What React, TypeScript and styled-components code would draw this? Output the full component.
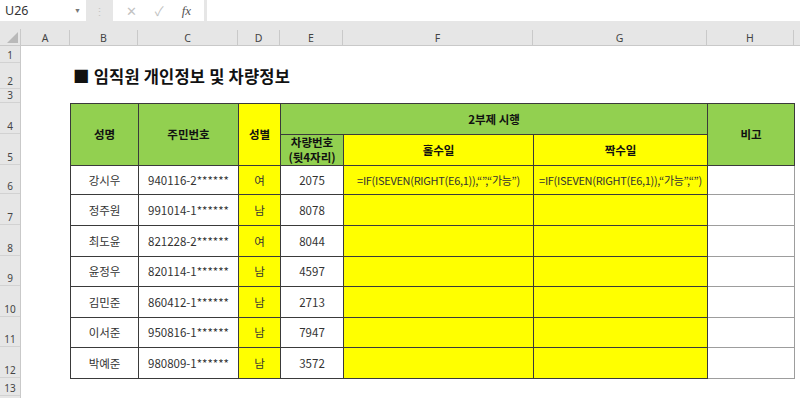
import styled, { createGlobalStyle } from "styled-components";

const GlobalStyle = createGlobalStyle`
  html, body {
    margin: 0;
    padding: 0;
    background: #ffffff;
    overflow: hidden;
  }
  body {
    font-family: "Noto Sans CJK KR", "Noto Sans", sans-serif;
  }
`;

const COLS = [
  { name: "A", width: 49 },
  { name: "B", width: 68 },
  { name: "C", width: 100 },
  { name: "D", width: 42 },
  { name: "E", width: 63 },
  { name: "F", width: 190 },
  { name: "G", width: 174 },
  { name: "H", width: 87 },
  { name: "", width: 60 },
];

const ROW_HEIGHTS = [17, 26, 14, 31, 31, 29, 31, 31, 30, 31, 30, 31, 18, 20];

const people = [
  { name: "강시우", id: "940116-2******", sex: "여", car: "2075" },
  { name: "정주원", id: "991014-1******", sex: "남", car: "8078" },
  { name: "최도윤", id: "821228-2******", sex: "여", car: "8044" },
  { name: "윤정우", id: "820114-1******", sex: "남", car: "4597" },
  { name: "김민준", id: "860412-1******", sex: "남", car: "2713" },
  { name: "이서준", id: "950816-1******", sex: "남", car: "7947" },
  { name: "박예준", id: "980809-1******", sex: "남", car: "3572" },
];

const Page = styled.div`
  width: 800px;
  height: 398px;
  overflow: hidden;
  background: #ffffff;
`;

const TopArea = styled.div`
  background: #e6e6e6;
`;

const FormulaBar = styled.div`
  display: flex;
  align-items: stretch;
  height: 21px;
  padding-bottom: 8px;
`;

const NameBox = styled.div`
  width: 86px;
  background: #ffffff;
  display: flex;
  align-items: center;
  justify-content: space-between;
  padding: 0 5px 0 5px;
  box-sizing: border-box;
  font-family: "Noto Sans", sans-serif;
  font-size: 12.5px;
  color: #333;
`;

const Caret = styled.span`
  font-size: 7px;
  color: #777;
`;

const Grip = styled.div`
  width: 27px;
  display: flex;
  align-items: center;
  justify-content: center;
  color: #c4c4c4;
  font-size: 11px;
`;

const FxBox = styled.div`
  width: 91px;
  background: #ffffff;
  display: flex;
  align-items: center;
  justify-content: space-around;
  padding: 0 4px;
  box-sizing: border-box;
  color: #c2c2c2;
  font-size: 13px;
`;

const FxLabel = styled.span`
  font-family: "Liberation Serif", serif;
  font-style: italic;
  color: #555;
  font-size: 13px;
`;

const FormulaInput = styled.div`
  flex: 1;
  margin-left: 3px;
  background: #ffffff;
`;

const ColumnHeaderRow = styled.div`
  display: flex;
  height: 16px;
  border-bottom: 1px solid #c9c9c9;
`;

const Corner = styled.div`
  width: 20px;
  flex-shrink: 0;
  border-right: 1px solid #c9c9c9;
  position: relative;
`;

const CornerTriangle = styled.div`
  position: absolute;
  right: 2px;
  bottom: 2px;
  width: 0;
  height: 0;
  border-left: 11px solid transparent;
  border-bottom: 11px solid #b9b9b9;
`;

const ColHead = styled.div<{ $w: number }>`
  width: ${(p) => p.$w - 1}px;
  flex-shrink: 0;
  border-right: 1px solid #c9c9c9;
  display: flex;
  align-items: center;
  justify-content: center;
  font-family: "Noto Sans", sans-serif;
  font-size: 10.5px;
  color: #444;
  margin-top: 1px;
`;

const Body = styled.div`
  display: flex;
`;

const RowHeaders = styled.div`
  width: 20px;
  flex-shrink: 0;
  background: #e6e6e6;
  border-right: 1px solid #c9c9c9;
  display: flex;
  flex-direction: column;
`;

const RowNum = styled.div<{ $h: number }>`
  height: ${(p) => p.$h - 1}px;
  border-bottom: 1px solid #d2d2d2;
  display: flex;
  align-items: flex-end;
  justify-content: center;
  font-family: "Noto Sans", sans-serif;
  font-size: 10px;
  line-height: 14px;
  color: #444;
`;

const Canvas = styled.div`
  flex: 1;
  padding-left: 49px;
  padding-top: 17px;
`;

const Title = styled.div`
  height: 26px;
  margin-bottom: 14px;
  display: flex;
  align-items: center;
  padding-left: 3px;
  font-size: 16.5px;
  font-weight: 700;
  color: #111;
  letter-spacing: 0.2px;
`;

const Table = styled.table`
  border-collapse: collapse;
  table-layout: fixed;
  font-size: 11.5px;
`;

const Row = styled.tr<{ $h: number }>`
  height: ${(p) => p.$h}px;
`;

const Cell = styled.td<{ $bg?: string; $head?: boolean; $soft?: boolean }>`
  border: 1px solid ${(p) => (p.$soft ? "#9d9d9d" : "#3a3a3a")};
  background: ${(p) => p.$bg ?? "#ffffff"};
  text-align: center;
  vertical-align: middle;
  padding: 0;
  white-space: nowrap;
  overflow: visible;
  font-weight: ${(p) => (p.$head ? 700 : 400)};
  color: ${(p) => (p.$head ? "#111" : "#333")};
  line-height: 15px;
`;

const Formula = styled.span`
  font-size: 11px;
  letter-spacing: -0.3px;
`;

const GREEN = "#92d050";
const YELLOW = "#ffff00";

export default function App() {
  return (
    <>
      <GlobalStyle />
      <Page>
        <TopArea>
          <FormulaBar>
            <NameBox>
              U26
              <Caret>▼</Caret>
            </NameBox>
            <Grip>⋮</Grip>
            <FxBox>
              <span>✕</span>
              <span>✓</span>
              <FxLabel>fx</FxLabel>
            </FxBox>
            <FormulaInput />
          </FormulaBar>
          <ColumnHeaderRow>
            <Corner>
              <CornerTriangle />
            </Corner>
            {COLS.map((c, i) => (
              <ColHead key={i} $w={c.width}>
                {c.name}
              </ColHead>
            ))}
          </ColumnHeaderRow>
        </TopArea>
        <Body>
          <RowHeaders>
            {ROW_HEIGHTS.map((h, i) => (
              <RowNum key={i} $h={h}>
                {i < 13 ? i + 1 : ""}
              </RowNum>
            ))}
          </RowHeaders>
          <Canvas>
            <Title>■ 임직원 개인정보 및 차량정보</Title>
            <Table>
              <colgroup>
                {COLS.slice(1, 8).map((c) => (
                  <col key={c.name} style={{ width: c.width }} />
                ))}
              </colgroup>
              <tbody>
                <Row $h={ROW_HEIGHTS[3]}>
                  <Cell rowSpan={2} $bg={GREEN} $head>
                    성명
                  </Cell>
                  <Cell rowSpan={2} $bg={GREEN} $head>
                    주민번호
                  </Cell>
                  <Cell rowSpan={2} $bg={YELLOW} $head>
                    성별
                  </Cell>
                  <Cell colSpan={3} $bg={GREEN} $head>
                    2부제 시행
                  </Cell>
                  <Cell rowSpan={2} $bg={GREEN} $head>
                    비고
                  </Cell>
                </Row>
                <Row $h={ROW_HEIGHTS[4]}>
                  <Cell $bg={GREEN} $head>
                    차량번호
                    <br />
                    (뒷4자리)
                  </Cell>
                  <Cell $bg={YELLOW} $head>
                    홀수일
                  </Cell>
                  <Cell $bg={YELLOW} $head>
                    짝수일
                  </Cell>
                </Row>
                {people.map((p, i) => (
                  <Row key={p.name} $h={ROW_HEIGHTS[5 + i]}>
                    <Cell>{p.name}</Cell>
                    <Cell>{p.id}</Cell>
                    <Cell $bg={YELLOW}>{p.sex}</Cell>
                    <Cell>{p.car}</Cell>
                    <Cell $bg={YELLOW}>
                      {i === 0 && (
                        <Formula>=IF(ISEVEN(RIGHT(E6,1)),“”,“가능”)</Formula>
                      )}
                    </Cell>
                    <Cell $bg={YELLOW}>
                      {i === 0 && (
                        <Formula>=IF(ISEVEN(RIGHT(E6,1)),“가능”,“”)</Formula>
                      )}
                    </Cell>
                    <Cell $soft />
                  </Row>
                ))}
              </tbody>
            </Table>
          </Canvas>
        </Body>
      </Page>
    </>
  );
}
